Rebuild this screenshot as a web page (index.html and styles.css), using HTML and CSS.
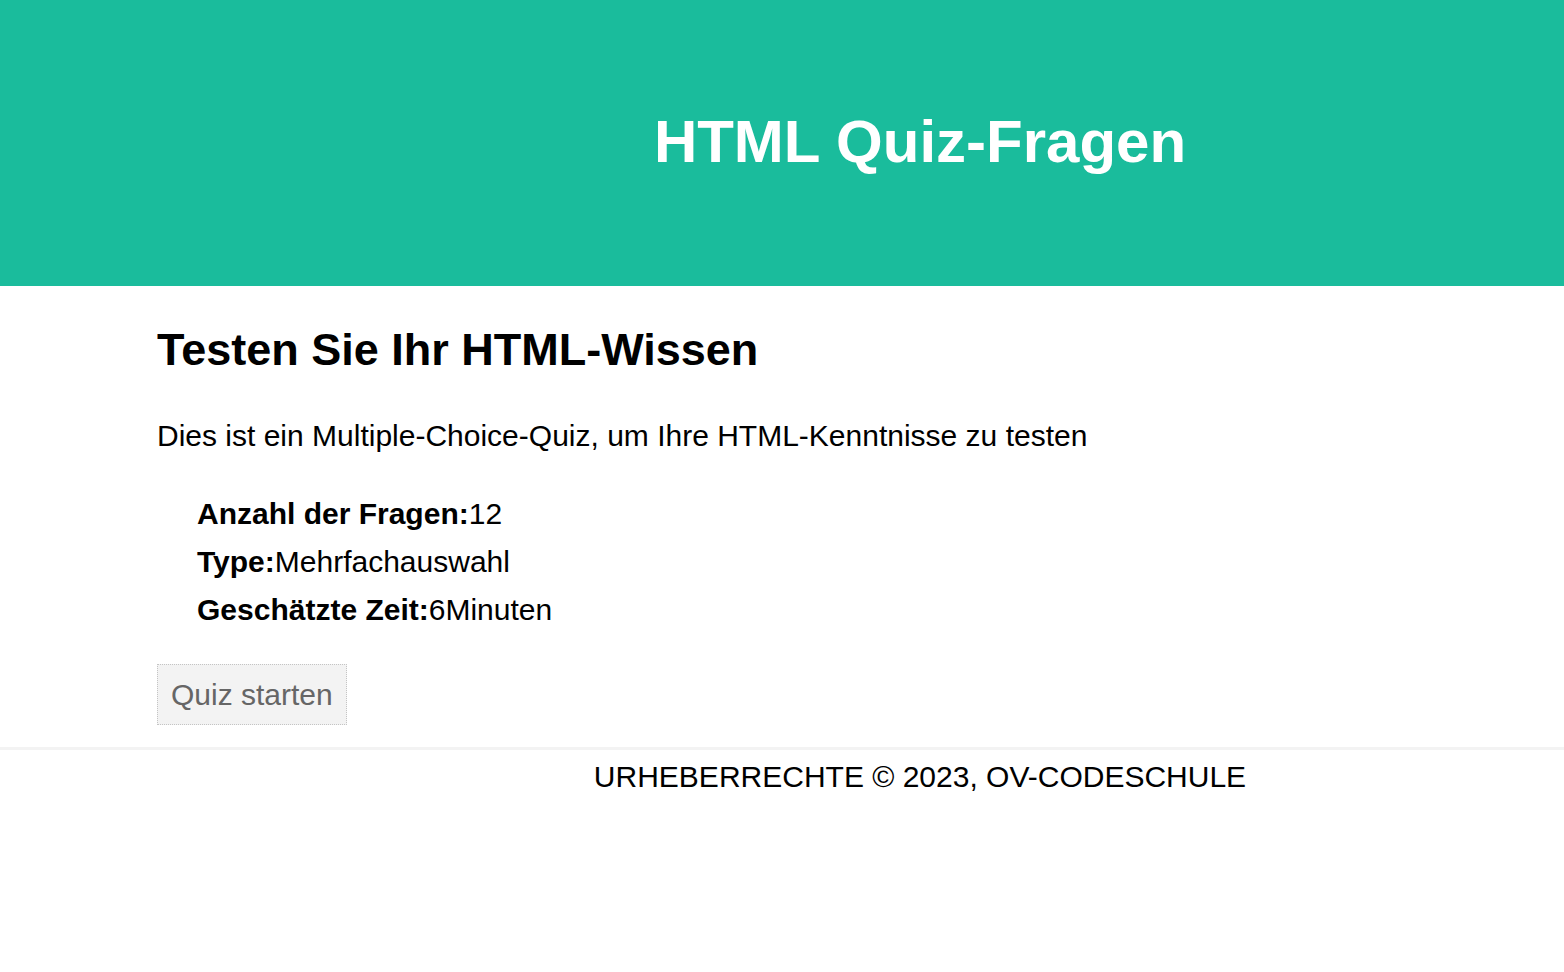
FILE: index.html
```html
<!DOCTYPE html>
<html lang="de">
<head>
<meta charset="utf-8">
<title>HTML Quiz-Fragen</title>
<link rel="stylesheet" href="styles.css">
</head>
<body>
<header class="site-header">
  <h1 class="site-title">HTML Quiz-Fragen</h1>
</header>
<main class="intro">
  <h2 class="intro-title">Testen Sie Ihr HTML-Wissen</h2>
  <p class="intro-text">Dies ist ein Multiple-Choice-Quiz, um Ihre HTML-Kenntnisse zu testen</p>
  <ul class="facts">
    <li><strong>Anzahl der Fragen:</strong>12</li>
    <li><strong>Type:</strong>Mehrfachauswahl</li>
    <li><strong>Geschätzte Zeit:</strong>6Minuten</li>
  </ul>
  <button class="start-btn" type="button">Quiz starten</button>
</main>
<footer class="site-footer">
  <p class="copyright">URHEBERRECHTE © 2023, OV-CODESCHULE</p>
</footer>
</body>
</html>
```

FILE: styles.css
```css
html, body {
  margin: 0;
  padding: 0;
  background: #ffffff;
}

body {
  font-family: "Liberation Sans", Arial, sans-serif;
  color: #000000;
}

.site-header {
  background: #1abc9c;
  height: 286px;
  box-sizing: border-box;
  padding: 107px 0 0 276px;
  text-align: center;
}

.site-title {
  margin: 0;
  font-size: 60px;
  font-weight: bold;
  line-height: normal;
  color: #ffffff;
}

.intro {
  padding: 0 157px;
  display: flex;
  flex-direction: column;
  align-items: flex-start;
}

.intro-title {
  margin: 38px 0 0 0;
  font-size: 45px;
  font-weight: bold;
  line-height: normal;
}

.intro-text {
  margin: 43px 0 0 0;
  font-size: 30px;
  line-height: normal;
}

.facts {
  list-style: none;
  margin: 37px 0 0 0;
  padding: 0 0 0 40px;
  font-size: 30px;
  line-height: 48px;
}

.start-btn {
  margin-top: 30px;
  font-family: "Liberation Sans", Arial, sans-serif;
  font-size: 30px;
  line-height: normal;
  color: #666666;
  background: #f3f3f3;
  border: 1px dotted #c4c4c4;
  padding: 12.5px 13px;
  cursor: pointer;
}

.site-footer {
  margin-top: 22px;
  border-top: 3px solid #f3f3f3;
  padding: 10px 0 0 276px;
  text-align: center;
}

.copyright {
  margin: 0;
  font-size: 30px;
  line-height: normal;
}
```
